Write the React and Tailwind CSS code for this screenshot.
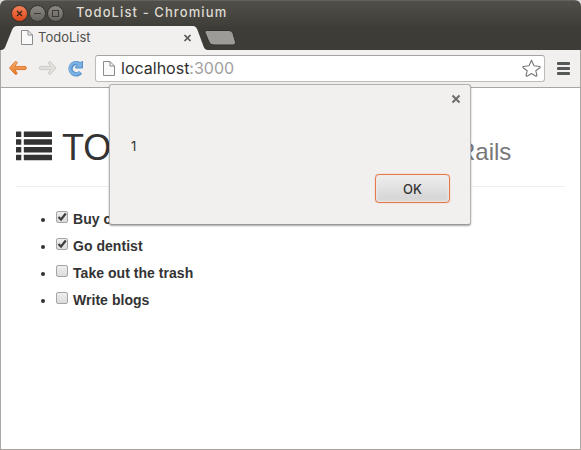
const UI = 'font-["Inter",sans-serif]';

function PageIcon({ className }) {
  return (
    <svg className={className} width="12" height="15" viewBox="0 0 12 15">
      <path d="M.5 .5H7L11.500 5V14.500H.5Z" fill="#f9f9f9" stroke="#8b8b8b" />
      <path d="M7 .5V5H11.500" fill="none" stroke="#8b8b8b" />
    </svg>
  );
}

function WindowButtons() {
  return (
    <svg className="ml-[10px] mt-[3px] shrink-0" width="56" height="19" viewBox="0 0 56 19">
      <defs>
        <linearGradient id="red" x1="0" y1="0" x2="0" y2="1">
          <stop offset="0" stopColor="#f5835c" />
          <stop offset="1" stopColor="#dc4517" />
        </linearGradient>
        <linearGradient id="gray" x1="0" y1="0" x2="0" y2="1">
          <stop offset="0" stopColor="#8b8981" />
          <stop offset="1" stopColor="#65635c" />
        </linearGradient>
      </defs>
      <circle cx="9.500" cy="9.500" r="8" fill="url(#red)" stroke="#33312c" />
      <circle cx="27.500" cy="9.500" r="8" fill="url(#gray)" stroke="#33312c" />
      <circle cx="45.500" cy="9.500" r="8" fill="url(#gray)" stroke="#33312c" />
      <path d="M7 7L12 12M12 7L7 12" stroke="#3a241a" strokeWidth="1.300" />
      <path d="M24 9.500H31" stroke="#3a3933" />
      <rect x="42.500" y="6.500" width="6" height="6" fill="none" stroke="#3a3933" />
    </svg>
  );
}

function TitleBar() {
  return (
    <div className="flex h-[26px] border-t border-[#64625c] bg-gradient-to-b from-[#504f49] to-[#3f3e39]">
      <WindowButtons />
      <div className={`${UI} ml-[10px] whitespace-nowrap text-[13px] font-medium leading-[23px] tracking-[1.100px] text-[#dfdbd2]`}>
        TodoList - Chromium
      </div>
    </div>
  );
}

function TabStrip() {
  return (
    <div className="relative flex h-[24px] bg-[#3d3c37]">
      <svg className="absolute left-0 top-0" width="240" height="24" viewBox="0 0 240 24">
        <path d="M0 24C4 24 5 22 6 19L12 4Q13.500 0 17 0H193Q196 0 197.500 4L203 19C204 22 205 24 209 24Z" fill="#f1f0ee" />
        <path d="M206.500 4.500H229Q232 4.500 233 7.500L235.500 16Q236 19 233 19H214Q210 19 209 16L205 6.500Q204.500 4.500 206.500 4.500Z" fill="#9c9b98" stroke="#31302c" />
      </svg>
      <div className="relative flex w-[205px] pl-[21px]">
        <PageIcon className="mt-[4px]" />
        <span className={`${UI} ml-[5px] text-[13px] leading-[23px] text-[#505050]`}>TodoList</span>
        <svg className="ml-auto mr-[13px] mt-[8px]" width="9" height="9" viewBox="0 0 9 9">
          <path d="M1.500 1L7.500 7M7.500 1L1.500 7" stroke="#555" strokeWidth="1.700" />
        </svg>
      </div>
    </div>
  );
}

function Toolbar() {
  return (
    <div className="flex h-[38px] items-start border-b border-[#a7a6a5] bg-[#f1f0ee]">
      <svg className="mt-[9px] shrink-0" width="94" height="20" viewBox="0 0 94 20">
        <defs>
          <linearGradient id="orange" x1="0" y1="0" x2="0" y2="1">
            <stop offset="0" stopColor="#f7b36a" />
            <stop offset="1" stopColor="#e57620" />
          </linearGradient>
        </defs>
        <path d="M8.500 9L14 2.800Q15.500 1.800 16.300 3.800L13.800 7.400H24.500Q26.500 9 24.500 10.600H13.800L16.300 14.200Q15.500 16.200 14 15.200Z" fill="url(#orange)" stroke="#dd7a38" strokeLinejoin="round" />
        <path d="M55 9L49.500 2.800Q48 1.800 47.200 3.800L49.700 7.400H39Q37 9 39 10.600H49.700L47.200 14.200Q48 16.200 49.500 15.200Z" fill="#e0dfdc" stroke="#cdccc9" strokeLinejoin="round" />
        <path d="M79.500 13.300A5.600 5.600 0 1 1 77 4.400" fill="none" stroke="#5590ca" strokeWidth="4.400" />
        <path d="M81.500 2V9H74.500V8L76.500 6L74.500 4L77 3L80 3.500Z" fill="#7bb1e4" stroke="#5590ca" strokeLinejoin="round" />
        <path d="M79 13A5.600 5.600 0 1 1 77 4.400L79.500 6.500" fill="none" stroke="#7bb1e4" strokeWidth="2.600" />
      </svg>
      <div className="mt-[5px] flex h-[27px] w-[450px] items-start rounded-[3px] border border-[#bcbbb9] border-t-[#a5a4a2] bg-white">
        <PageIcon className="ml-[7px] mt-[5px]" />
        <span className={`${UI} ml-[6px] text-[16px] leading-[25px] text-[#303030]`}>
          localhost<span className="text-[#a0a0a0]">:3000</span>
        </span>
        <svg className="ml-auto mr-[3px] mt-[3px]" width="19" height="19" viewBox="0 0 19 19">
          <path d="M9.500 1.200L12 6.800L17.800 7.500Q18.500 8 17.800 8.700L13.800 11.800L15 16.500Q14.800 17.500 13.500 17L9.500 14.500L5.500 17Q4.200 17.500 4 16.500L5.200 11.800L1.200 8.700Q.5 8 1.200 7.500L7 6.800L9.500 1.200Z" fill="#fff" stroke="#777" strokeWidth="1.100" strokeLinejoin="round" />
        </svg>
      </div>
      <div className="ml-[12px] mt-[12px] flex flex-col gap-[2px]">
        <div className="h-[3px] w-[13px] rounded-[1px] bg-[#555856]" />
        <div className="h-[3px] w-[13px] rounded-[1px] bg-[#555856]" />
        <div className="h-[3px] w-[13px] rounded-[1px] bg-[#555856]" />
      </div>
    </div>
  );
}

function ListIcon() {
  return (
    <svg className="mt-[43px] shrink-0" width="36" height="30" viewBox="0 0 36 30">
      {[0.5, 8.3, 16, 23.7].map((y) => (
        <g key={y} fill="#333">
          <rect x="0" y={y} width="5.300" height="5.500" rx=".5" />
          <rect x="7.800" y={y} width="28.200" height="5.500" rx=".5" />
        </g>
      ))}
    </svg>
  );
}

function Todo({ label, done }) {
  return (
    <li className="flex h-[27px] items-start">
      <span className="mt-[9px] h-1 w-1 rounded-full bg-[#333]" />
      <span className="ml-[11px] mt-[2px] flex h-3 w-3 rounded-[2px] border border-[#a5a5a5] bg-gradient-to-b from-[#eeeeee] to-[#dcdcdc]">
        {done && (
          <svg width="10" height="10" viewBox="0 0 10 10">
            <path d="M1.500 5L4 7.500L8.800 1.500" fill="none" stroke="#404040" strokeWidth="2.200" />
          </svg>
        )}
      </span>
      <span className="ml-[5px] whitespace-nowrap text-[14px] font-bold leading-[20px] tracking-[0.040px]">{label}</span>
    </li>
  );
}

function AlertDialog() {
  return (
    <div className="absolute left-[109px] top-[84px] flex h-[141px] w-[362px] flex-col rounded-[3px] border border-[#b4b4b4] border-b-[#999] bg-[#f1f0ee] shadow-[0_1px_2px_rgba(0,0,0,0.350)]">
      <svg className="ml-auto mr-[9px] mt-[9px]" width="10" height="10" viewBox="0 0 10 10">
        <path d="M1.500 1.500L8.500 8.500M8.500 1.500L1.500 8.500" stroke="#6c6c6c" strokeWidth="2" />
      </svg>
      <p className={`${UI} ml-[21px] mt-[32px] text-[13px] leading-[20px] text-[#333]`}>1</p>
      <button className={`${UI} ml-auto mr-[20px] mt-[18px] h-[29px] w-[75px] rounded-[4px] border border-[#e5794d] bg-gradient-to-b from-[#efefef] to-[#d2d2d2] text-[13px] font-medium leading-[28px] text-[#333] shadow-[0_0_1px_#e5794d,inset_0_0_3px_1px_#eeebe9]`}>
        OK
      </button>
    </div>
  );
}

export default function App() {
  return (
    <div className="h-[450px] w-[581px] bg-[#dcdcdc]">
      <div className="relative flex h-[450px] w-[581px] flex-col overflow-hidden rounded-t-[6px] bg-white">
        <TitleBar />
        <TabStrip />
        <div className="flex flex-1 flex-col border-x border-b border-[#aaa7a3]">
          <Toolbar />
          <main className='flex-1 px-[15px] font-["Liberation_Sans",sans-serif] text-[#333]'>
            <header className="flex h-[99px] border-b border-[#eeeeee]">
              <ListIcon />
              <h1 className="ml-[10px] mt-[40px] w-[396px] overflow-hidden whitespace-nowrap text-[36px] leading-[40px]">TO</h1>
              <small className="mt-[50px] text-[24px] leading-[28px] text-[#777]">Rails</small>
            </header>
            <ul className="ml-[25px] mt-[22px]">
              <Todo label="Buy c" done />
              <Todo label="Go dentist" done />
              <Todo label="Take out the trash" />
              <Todo label="Write blogs" />
            </ul>
          </main>
        </div>
        <AlertDialog />
      </div>
    </div>
  );
}
